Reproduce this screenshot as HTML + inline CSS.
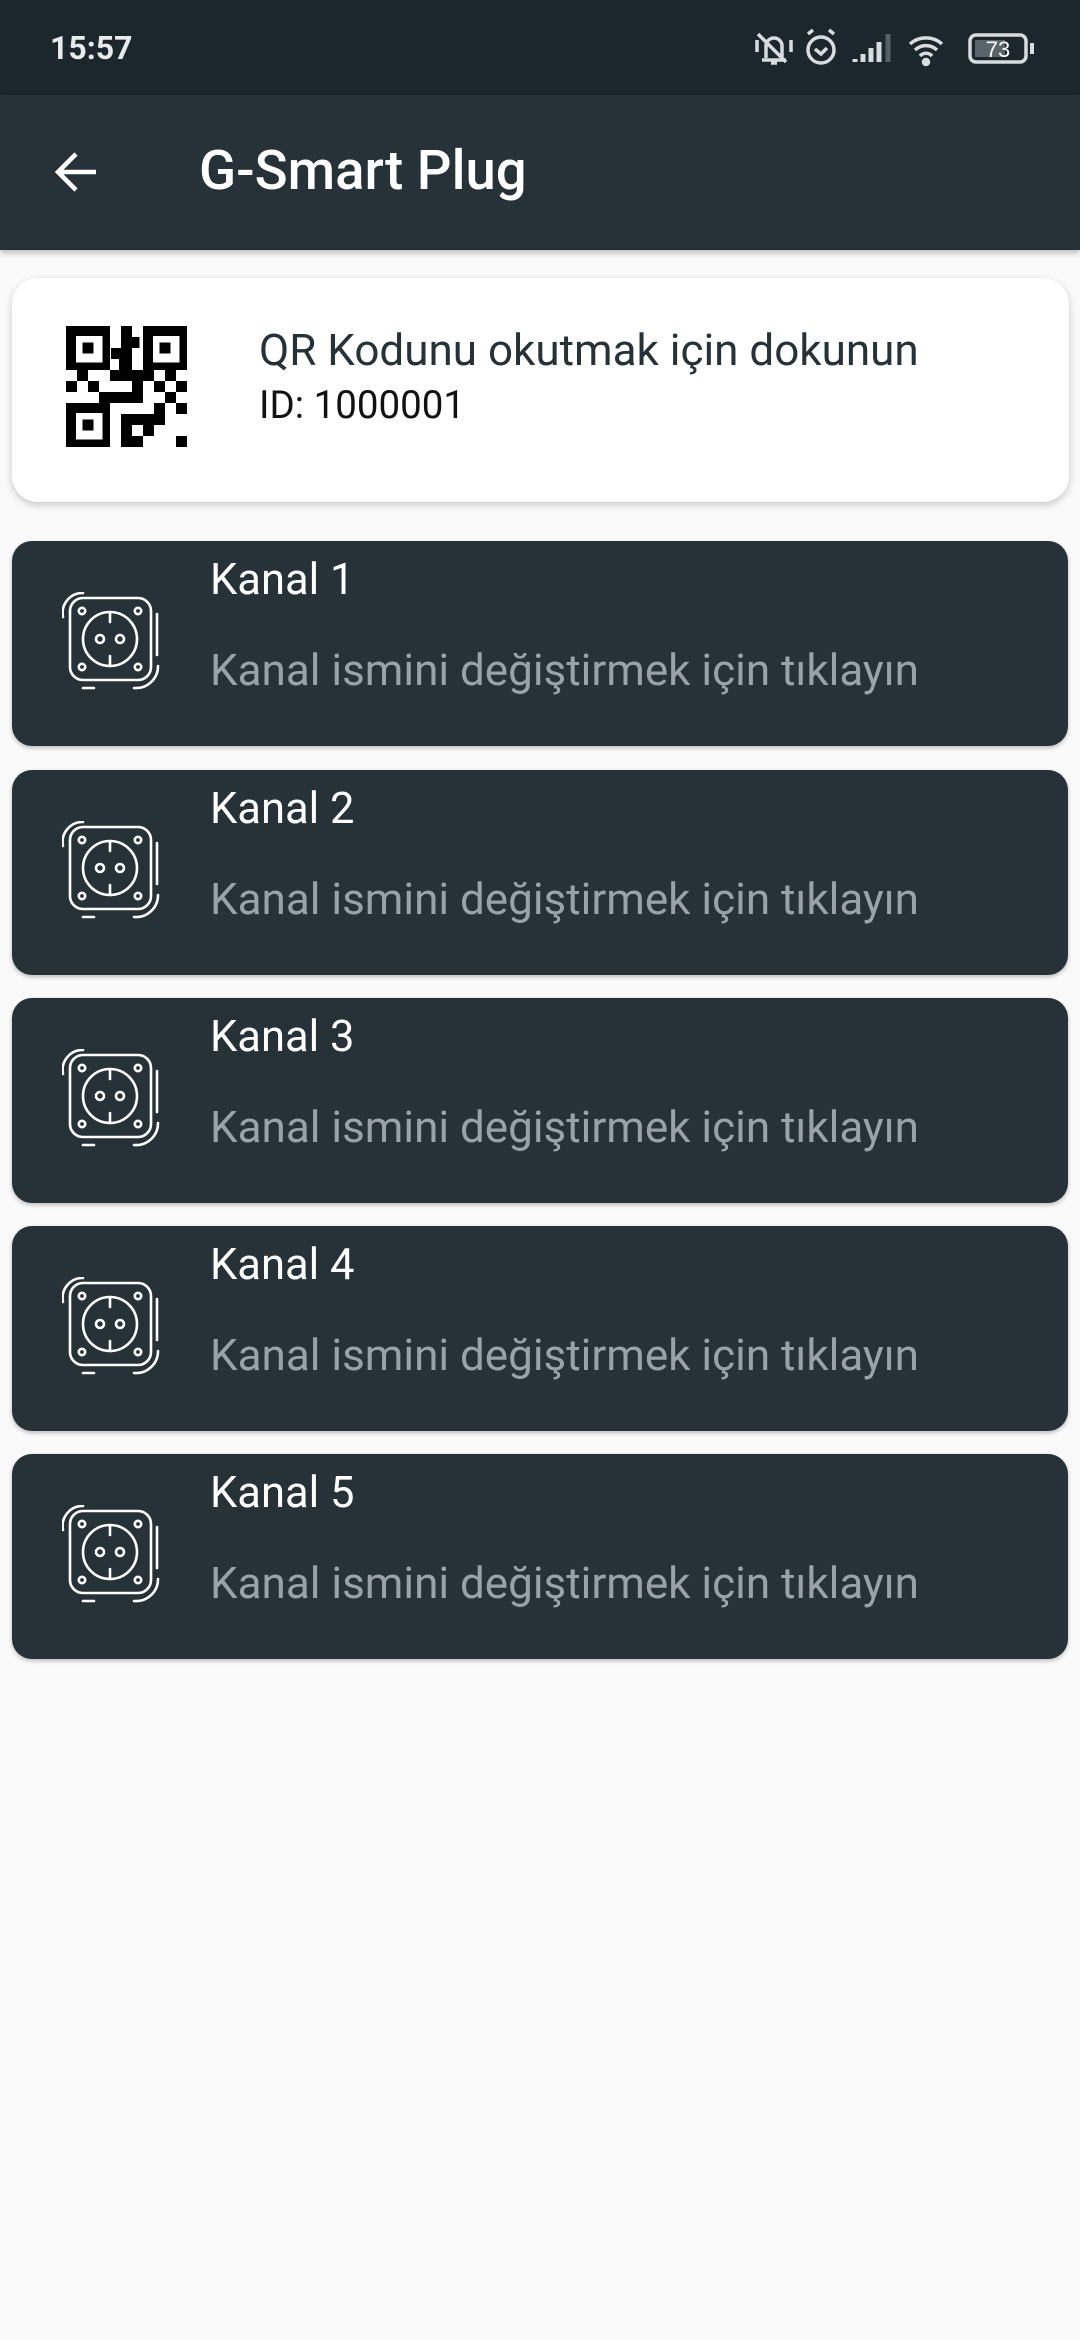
<!DOCTYPE html>
<html><head><meta charset="utf-8"><style>
*{margin:0;padding:0;box-sizing:border-box}
body{width:1080px;height:2340px;background:#fafafa;font-family:"Roboto","Liberation Sans",sans-serif;position:relative;overflow:hidden}
.sb{position:absolute;left:0;top:0;width:1080px;height:95px;background:#1c262d}
.time{position:absolute;left:50px;top:29px;color:#e8eaeb;font-weight:bold;font-size:32px}
.ab{position:absolute;left:0;top:95px;width:1080px;height:155px;background:#263238;box-shadow:0 3px 6px rgba(0,0,0,.25)}
.title{position:absolute;left:199px;top:44px;color:#fff;font-size:54.5px;font-weight:500}
.qr{position:absolute;left:12px;top:278px;width:1057px;height:224px;background:#fff;border-radius:26px;box-shadow:0 3px 8px rgba(0,0,0,.2)}
.t1{position:absolute;left:247px;top:46px;font-size:44px;color:#263238;white-space:nowrap}
.t2{position:absolute;left:247px;top:105px;font-size:38.5px;color:#111;white-space:nowrap}
.card{position:absolute;left:12px;width:1056px;height:205px;background:#263238;border-radius:20px;box-shadow:0 2px 4px rgba(0,0,0,.25)}
.card svg{position:absolute;left:50px;top:51px}
.k{position:absolute;left:198px;top:13px;font-size:43.5px;color:#fff;white-space:nowrap}
.s{position:absolute;left:198px;top:103px;font-size:44px;color:#98a2a8;white-space:nowrap}
</style></head><body>
<div class="sb"><div class="time">15:57</div>
<svg style="position:absolute;left:750px;top:28px" width="300" height="42" viewBox="750 28 300 42" fill="none" stroke="#d8dcde" stroke-width="3.5">
<path d="M762 60h24M766 58v-12a8 8 0 0 1 16 0v12M771 63h6M758 34l28 28M757 40v12M791 40v12"/>
<circle cx="821" cy="50" r="13"/><path d="M815 49l6 5 6-6M808 34l5-4M834 34l-5-4"/>
<path d="M855 62v-3M863 62v-8M871 62v-14M879 62v-20" stroke-width="5"/><path d="M888 62v-28" stroke="#555f66" stroke-width="5"/>
<path d="M910 44a24 24 0 0 1 32 0M915 50a16 16 0 0 1 22 0M920 56a8 8 0 0 1 12 0"/><circle cx="926" cy="62" r="2.5" fill="#d8dcde"/>
<rect x="970" y="35" width="56" height="27" rx="6"/><rect x="975" y="40" width="30" height="17" fill="#5a656b" stroke="none"/><path d="M1032 43v11" stroke-width="4"/>
<text x="998" y="57" fill="#fff" stroke="none" font-size="22" font-family="Liberation Sans" text-anchor="middle">73</text>
</svg></div>
<div class="ab">
<svg style="position:absolute;left:52px;top:53px" width="48" height="48" viewBox="0 0 48 48" fill="none" stroke="#fff" stroke-width="4.5"><path d="M44 24H6M24 6L6 24l18 18"/></svg>
<div class="title">G-Smart Plug</div></div>
<div class="qr">
<svg style="position:absolute;left:54px;top:48px" width="121" height="121" viewBox="0 0 11 11" fill="#000" shape-rendering="crispEdges">
<path d="M0 0h4v4H0zM7 0h4v4H7zM0 7h4v4H0z"/>
<path fill="#fff" d="M.9.9h2.4v2.4H.9zM7.9.9h2.4v2.4H7.9zM.9 7.9h2.4v2.4H.9z"/>
<path d="M1.5 1.5h1v1h-1zM8.5 1.5h1v1h-1zM1.5 8.5h1v1h-1z"/>
<path d="M5 0h1v1h.7v1H6v2H4.8V3h-.7V2H5zM1 4h1v1H1zM4 4h4v1H7v1H6V5H4zM9 4h1v1H9zM0 5h1v1H0zM2 5h1v1H2zM8 5h1v1H8zM10 5h1v1h-1zM3 6h4v1H3zM9 6h1v1H9zM8 7h1v1H8zM10 7h1v1h-1zM5 8h4v1H8v1H7V9H6v2H5zM6 10h1v1H6zM10 10h1v1h-1zM8 10h.1z"/>
</svg>
<div class="t1">QR Kodunu okutmak için dokunun</div>
<div class="t2">ID: 1000001</div></div>

<svg width="0" height="0" style="position:absolute"><defs><g id="sock" fill="none" stroke="#fff" stroke-width="2.6" stroke-linecap="round">
<rect x="8" y="6" width="81" height="82" rx="13"/><circle cx="48" cy="47" r="27"/>
<circle cx="38" cy="47" r="4"/><circle cx="58" cy="47" r="4"/>
<path d="M48 20v10M48 64v10"/>
<circle cx="20" cy="19" r="3.2"/><circle cx="76" cy="19" r="3.2"/><circle cx="20" cy="75" r="3.2"/><circle cx="76" cy="75" r="3.2"/>
<path d="M1 25A20 20 0 0 1 21 1M95 22v41M96 74A22 22 0 0 1 72 96M21 96h11"/>
</g></defs></svg>

<div class="card" style="top:541px"><svg width="100" height="100"><use href="#sock"/></svg><div class="k">Kanal 1</div><div class="s">Kanal ismini değiştirmek için tıklayın</div></div>
<div class="card" style="top:770px"><svg width="100" height="100"><use href="#sock"/></svg><div class="k">Kanal 2</div><div class="s">Kanal ismini değiştirmek için tıklayın</div></div>
<div class="card" style="top:998px"><svg width="100" height="100"><use href="#sock"/></svg><div class="k">Kanal 3</div><div class="s">Kanal ismini değiştirmek için tıklayın</div></div>
<div class="card" style="top:1226px"><svg width="100" height="100"><use href="#sock"/></svg><div class="k">Kanal 4</div><div class="s">Kanal ismini değiştirmek için tıklayın</div></div>
<div class="card" style="top:1454px"><svg width="100" height="100"><use href="#sock"/></svg><div class="k">Kanal 5</div><div class="s">Kanal ismini değiştirmek için tıklayın</div></div>
</body></html>
